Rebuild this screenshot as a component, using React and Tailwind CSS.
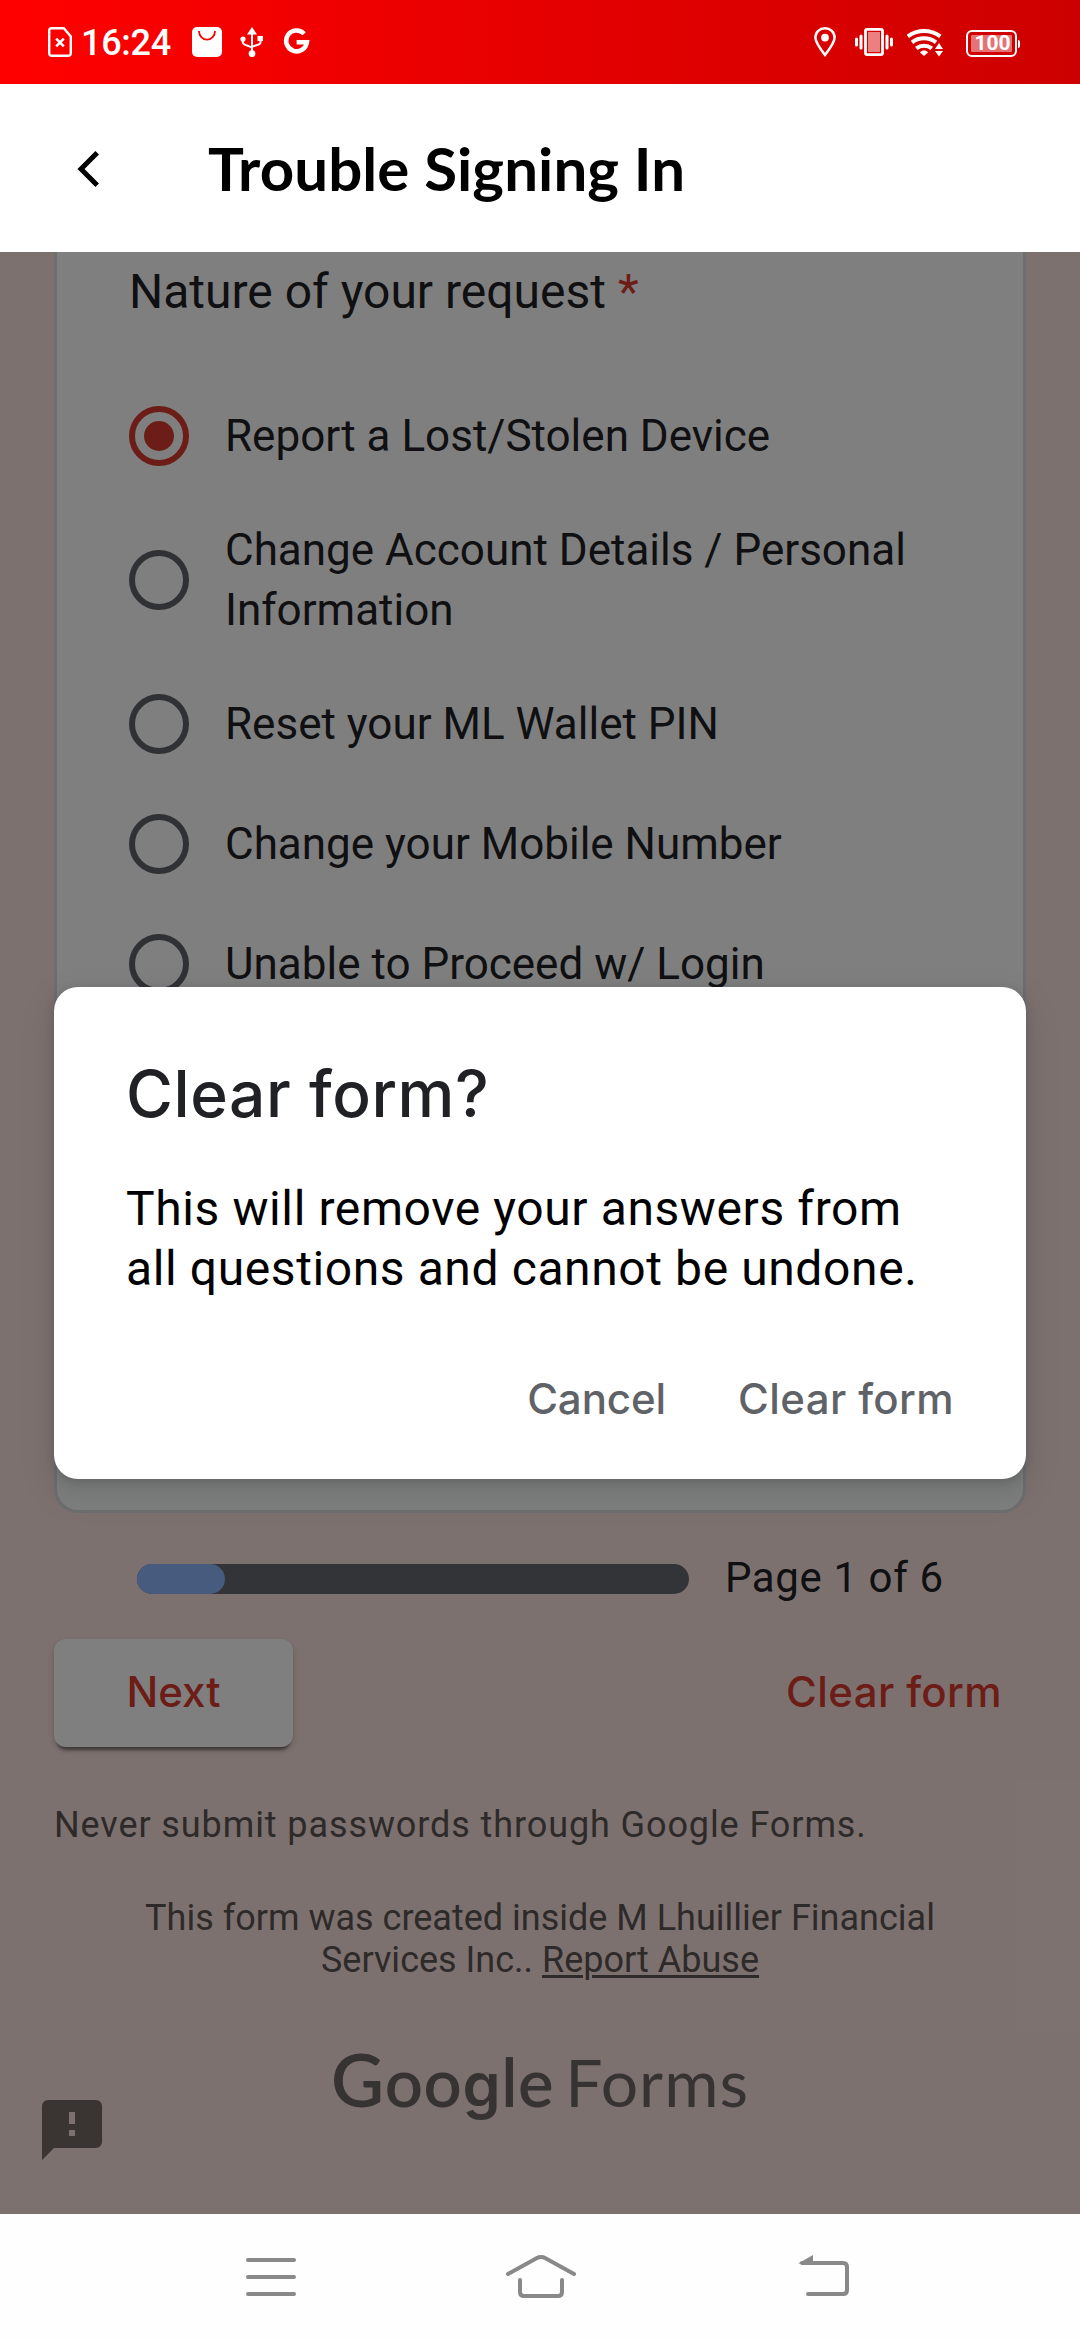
import React from "react";

const options = [
  { label: "Report a Lost/Stolen Device", checked: true },
  { label: "Change Account Details / Personal Information", tall: true },
  { label: "Reset your ML Wallet PIN" },
  { label: "Change your Mobile Number" },
  { label: "Unable to Proceed w/ Login" },
];

function StatusBar() {
  return (
    <div className="flex h-[84px] items-start bg-linear-to-r from-[#ff0000] to-[#cd0000] pt-[27px] text-white">
      <svg className="ml-[48px] shrink-0" width="24" height="30" viewBox="0 0 24 30" fill="none" stroke="currentColor">
        <path d="M3.5 1.2h12.3l7 8.2v17.1a2.3 2.3 0 0 1-2.3 2.3h-17a2.3 2.3 0 0 1-2.3-2.3V3.500a2.300 2.300 0 0 1 2.300-2.300z" strokeWidth="2.400" />
        <path d="M8.200 11.700l7.600 7.600M15.800 11.700l-7.600 7.600" strokeWidth="2.600" />
      </svg>
      <div className="ml-[9px] w-[92px] font-['Roboto',sans-serif] text-[36px] font-medium leading-[33px] tracking-[-0.3px]">16:24</div>
      <svg className="ml-[19px] shrink-0" width="30" height="30" viewBox="0 0 30 30">
        <rect width="30" height="30" rx="5" fill="currentColor" />
        <path d="M7 4c0 5 3.500 8.700 8 8.700s8-3.700 8-8.700" fill="none" stroke="#f60000" strokeWidth="1.800" />
      </svg>
      <svg className="ml-[18px] shrink-0" width="24" height="30" viewBox="0 0 24 30" fill="none" stroke="currentColor" strokeWidth="2">
        <path d="M12 5v20M2.800 12v3.500c0 3 9.200 3.500 9.200 6M20.500 12v3.500c0 3-8.500 3-8.500 5" />
        <path d="M12 0l5 7.500H7z" fill="currentColor" stroke="none" />
        <circle cx="12" cy="26.700" r="3.400" fill="currentColor" stroke="none" />
        <circle cx="3" cy="12" r="2.600" fill="currentColor" stroke="none" />
        <rect x="17.500" y="9" width="5.500" height="5" fill="currentColor" stroke="none" />
      </svg>
      <svg className="ml-[19px] mt-[1px] shrink-0" width="27" height="27" viewBox="0 0 27 27" fill="none" stroke="currentColor" strokeWidth="4.600">
        <path d="M21.200 5.800A10.400 10.400 0 1 0 23.900 14.200H13.600" />
      </svg>

      <svg className="ml-[503px] shrink-0" width="24" height="30" viewBox="0 0 24 30">
        <path d="M12 1.300c5.300 0 9.600 3.900 9.600 9.300 0 4.600-4.600 11-9.600 17.400C7 21.600 2.400 15.200 2.400 10.600 2.400 5.200 6.700 1.300 12 1.300z" fill="none" stroke="currentColor" strokeWidth="2.500" />
        <circle cx="12" cy="10.600" r="3.900" fill="currentColor" />
      </svg>
      <svg className="ml-[18px] mt-[1px] shrink-0" width="38" height="28" viewBox="0 0 38 28">
        <rect x="10.500" y="1.400" width="17" height="25.200" rx="1.500" fill="none" stroke="currentColor" strokeWidth="2.800" />
        <rect x="13" y="4" width="12" height="20" fill="currentColor" fillOpacity="0.500" />
        <path d="M1.500 11v6M6 8v12M32 8v12M36.500 11v6" stroke="currentColor" strokeWidth="3" strokeLinecap="round" />
      </svg>
      <svg className="ml-[13px] mt-[2px] shrink-0" width="37" height="28" viewBox="0 0 37 28" fill="none" stroke="currentColor" strokeWidth="4">
        <path d="M1.800 7.300c9.500-7 23-7 32.500 0M6 13.300c7-5.300 17-5.300 24 0M10.300 19.300c4.500-3.500 11-3.500 15.500 0" />
        <path d="M18 27l-4-3.500c2-2.600 6-2.600 8 0z" fill="currentColor" stroke="none" />
        <path d="M33 14l4 6h-8zM33 27.500l-4-5.500h8z" fill="currentColor" stroke="none" />
      </svg>
      <div className="ml-[23px] mt-[3px] flex items-center">
        <div className="flex h-[27px] w-[51px] items-center justify-center rounded-[6px] border-2 border-white p-[3px]">
          <div className="flex h-full w-full items-center justify-center rounded-[1px] bg-white/45 pl-[2px] font-['Roboto',sans-serif] text-[21px] font-bold leading-none">100</div>
        </div>
        <div className="ml-px h-[8px] w-[2px] rounded-r-sm bg-white" />
      </div>
    </div>
  );
}

function Header() {
  return (
    <header className="flex h-[168px] items-center bg-white text-black">
      <svg className="ml-[77px] mt-[2px]" width="23" height="36" viewBox="0 0 23 36" fill="none" stroke="currentColor" strokeWidth="5">
        <path d="M20.200 1.800L4 18l16.200 16.200" />
      </svg>
      <h1 className="ml-[108px] font-['Lato',sans-serif] text-[60px] font-bold leading-[72px] tracking-[0.1px]">Trouble Signing In</h1>
    </header>
  );
}

function Option({ label, checked, tall }) {
  return (
    <label className={tall ? "flex items-center py-[24px]" : "flex items-center py-[30px]"}>
      {checked ? (
        <span className="flex size-[60px] shrink-0 items-center justify-center rounded-full border-6 border-[#db3a2e]">
          <span className="size-[30px] rounded-full bg-[#db3a2e]" />
        </span>
      ) : (
        <span className="size-[60px] shrink-0 rounded-full border-6 border-[#5f6368]" />
      )}
      <span className="ml-[36px] text-[44px] leading-[60px]">{label}</span>
    </label>
  );
}

function FormPage() {
  return (
    <div className="h-full overflow-hidden bg-[#fae3df] px-[54px] font-['Roboto',sans-serif] text-[#202124]">
      <section className="h-[1261px] rounded-b-[24px] border-x-3 border-b-3 border-[#dadce0] bg-white px-[72px] pt-[10px]">
        <h2 className="text-[48px] leading-[60px]">
          Nature of your request <span className="text-[#db3a2e]">*</span>
        </h2>
        <div className="mt-[54px]">
          {options.map((o) => (
            <Option key={o.label} {...o} />
          ))}
        </div>
      </section>
      <div className="mt-[36px] flex h-[60px] items-center pl-[83px]">
        <div className="h-[30px] w-[552px] rounded-[15px] bg-[#66696e]">
          <div className="h-full w-[88px] rounded-[15px] bg-[#8eb6ff]" />
        </div>
        <span className="ml-[36px] pb-[2px] text-[42px] leading-[54px] tracking-[0.6px]">Page 1 of 6</span>
      </div>
      <div className="mt-[30px] flex items-center justify-between font-['Inter',sans-serif] text-[42px] font-medium tracking-[0.4px] text-[#db3a2e]">
        <div className="flex h-[108px] w-[239px] items-center justify-center rounded-[12px] bg-white pb-[4px] tracking-normal shadow-[0_6px_3px_-3px_rgba(0,0,0,0.4),0_3px_6px_rgba(0,0,0,0.2)]">Next</div>
        <div className="pb-[4px] pr-[24px]">Clear form</div>
      </div>
      <p className="mt-[51px] text-[36px] leading-[54px] tracking-[0.9px] text-[#5d5452]">Never submit passwords through Google Forms.</p>
      <p className="mx-auto mt-[45px] w-[840px] text-center text-[36px] leading-[42px] text-[#5d5452]">
        This form was created inside M Lhuillier Financial Services Inc.. <span className="underline decoration-3 underline-offset-[3px]">Report Abuse</span>
      </p>
      <div className="mt-[53px] flex h-[90px] items-baseline justify-center font-['Lato',sans-serif] text-[67px] leading-[90px] text-[#6e6664]">
        <span className="font-semibold tracking-[0.6px]">
          <span className="text-[73px]">G</span>oo<span className="font-['Inter',sans-serif] text-[61px]">g</span>le
        </span>
        <span className="ml-[11px] text-[66px] tracking-[1px]">Forms</span>
      </div>
    </div>
  );
}

function ClearDialog() {
  return (
    <div className="absolute inset-x-[54px] top-[735px] h-[492px] rounded-[24px] bg-white px-[72px] pt-[67px] shadow-[0_3px_9px_rgba(60,64,67,0.3),0_12px_24px_9px_rgba(60,64,67,0.15)]">
      <h3 className="font-['Inter',sans-serif] text-[64px] font-medium leading-[80px] tracking-[0.6px] text-[#202124]">Clear form?</h3>
      <p className="mt-[45px] font-['Roboto',sans-serif] text-[48px] leading-[60px] tracking-[0.6px] text-black">
        This will remove your answers from all questions and cannot be undone.
      </p>
      <div className="mt-[73px] flex justify-end gap-[72px] font-['Inter',sans-serif] text-[42px] font-medium leading-[54px] tracking-[0.4px] text-[#5f6368]">
        <span className="tracking-[-0.1px]">Cancel</span>
        <span>Clear form</span>
      </div>
    </div>
  );
}

function NavBar() {
  return (
    <nav className="flex h-[126px] items-start bg-[#fefefe] pt-[40px] text-[#898989]">
      <svg className="ml-[246px]" width="50" height="46" viewBox="0 0 50 46" stroke="currentColor" strokeWidth="4" strokeLinecap="round">
        <path d="M2 6h46M2 23h46M2 40h46" />
      </svg>
      <svg className="ml-[210px]" width="70" height="46" viewBox="0 0 70 46" fill="none" stroke="currentColor" strokeWidth="4" strokeLinecap="round">
        <path d="M2 20L30.500 4.200q4.500-2.400 9 0L68 20M14 26v12q0 4 4 4h34q4 0 4-4V26" />
      </svg>
      <svg className="ml-[222px]" width="52" height="46" viewBox="0 0 52 46" fill="none" stroke="currentColor" strokeWidth="4" strokeLinecap="round">
        <path d="M4 9h41q4 0 4 4v23q0 4-4 4H10" />
        <path d="M0 9.500L15 1v9z" fill="currentColor" stroke="none" />
      </svg>
    </nav>
  );
}

export default function App() {
  return (
    <div className="flex h-[2340px] w-[1080px] flex-col overflow-hidden bg-white">
      <StatusBar />
      <Header />
      <main className="relative h-[1962px]">
        <FormPage />
        <svg className="absolute left-[42px] top-[1848px] text-[#746866]" width="60" height="60" viewBox="0 0 60 60">
          <path d="M6 0h48a6 6 0 0 1 6 6v36a6 6 0 0 1-6 6H12L0 60V6a6 6 0 0 1 6-6zM27 12v12h6V12zM27 30v6h6v-6z" fill="currentColor" fillRule="evenodd" />
        </svg>
        <div className="absolute inset-0 bg-black/50" />
        <ClearDialog />
      </main>
      <NavBar />
    </div>
  );
}
